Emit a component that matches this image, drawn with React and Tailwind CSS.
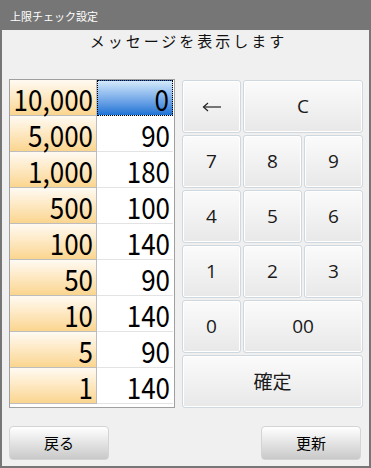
import React from 'react';

const rows = [
  { k: '10,000', v: '0', sel: true },
  { k: '5,000', v: '90' },
  { k: '1,000', v: '180' },
  { k: '500', v: '100' },
  { k: '100', v: '140' },
  { k: '50', v: '90' },
  { k: '10', v: '140' },
  { k: '5', v: '90' },
  { k: '1', v: '140' },
];

const jp = { fontFamily: '"Noto Sans CJK JP", "Noto Sans", sans-serif' };

function Key({ children, className = '' }) {
  return (
    <button
      className={
        'flex items-center justify-center rounded-[3px] border border-[#cfd7df] bg-linear-to-b from-[#fbfbfb] to-[#e8e8e8] text-[19px] text-[#1a1a1a] shadow-[inset_0_0_0_1px_#ffffff] ' +
        className
      }
    >
      {children}
    </button>
  );
}

export default function App() {
  return (
    <div className="w-[371px] h-[468px] flex flex-col bg-[#f0f0f0]" style={jp}>
      {/* title bar */}
      <div className="h-[30px] shrink-0 bg-[#767676] flex items-center pl-[10px] pt-[2px] text-[11px] text-white">
        上限チェック設定
      </div>

      <div className="flex-1 flex flex-col border-x-2 border-b-2 border-[#767676]">
        <div className="h-[49px] shrink-0 pt-[1px] pl-[6px] text-center text-[15px] leading-[20px] tracking-[3px] text-[#111]">
          メッセージを表示します
        </div>

        <div className="flex pl-[7px] gap-[7px]">
          {/* table */}
          <div className="w-[166px] h-[329px] border border-[#a0a0a0] bg-white flex flex-col">
            {rows.map((r) => (
              <div key={r.k} className="h-[36px] flex shrink-0">
                <div className="w-[87px] border-r border-b border-[#bdbdbd] bg-linear-to-b from-[#fffaf2] to-[#fbd58f] flex items-center justify-end pr-[3px] whitespace-nowrap">
                  <span className="text-[26px] leading-none text-black scale-y-[1.15]">{r.k}</span>
                </div>
                <div
                  className={
                    'w-[76px] flex items-center justify-end pr-[3px] ' +
                    (r.sel
                      ? 'border border-dotted border-black bg-linear-to-b from-[#d4e9fb] to-[#1a72d4]'
                      : 'border-b border-[#e3e3e3]')
                  }
                >
                  <span className="text-[26px] leading-none text-black scale-y-[1.15]">{r.v}</span>
                </div>
              </div>
            ))}
          </div>

          {/* keypad */}
          <div className="mt-[1px] grid grid-cols-[59px_59px_59px] grid-rows-[53px_53px_53px_53px_53px_53px] gap-[2px]" style={{ fontFamily: '"Open Sans", "Noto Sans", sans-serif' }}>
            <Key>
              <svg width="20" height="10" viewBox="0 0 20 10" fill="none" stroke="#222" strokeWidth="1.2">
                <line x1="1.5" y1="5" x2="19" y2="5" />
                <polyline points="6,1 1.5,5 6,9" />
              </svg>
            </Key>
            <Key className="col-span-2">C</Key>
            <Key>7</Key>
            <Key>8</Key>
            <Key>9</Key>
            <Key>4</Key>
            <Key>5</Key>
            <Key>6</Key>
            <Key>1</Key>
            <Key>2</Key>
            <Key>3</Key>
            <Key>0</Key>
            <Key className="col-span-2">00</Key>
            <Key className="col-span-3">
              <span style={jp} className="text-[19px]">確定</span>
            </Key>
          </div>
        </div>

        <div className="mt-[18px] flex justify-between pl-[7px] pr-[8px]">
          <button className="w-[100px] h-[34px] rounded-[4px] border border-[#d4d4d4] bg-linear-to-b from-[#ffffff] to-[#c9c9c9] text-[15px] text-black">
            戻る
          </button>
          <button className="w-[100px] h-[34px] rounded-[4px] border border-[#d4d4d4] bg-linear-to-b from-[#ffffff] to-[#c9c9c9] text-[15px] text-black">
            更新
          </button>
        </div>
      </div>
    </div>
  );
}
